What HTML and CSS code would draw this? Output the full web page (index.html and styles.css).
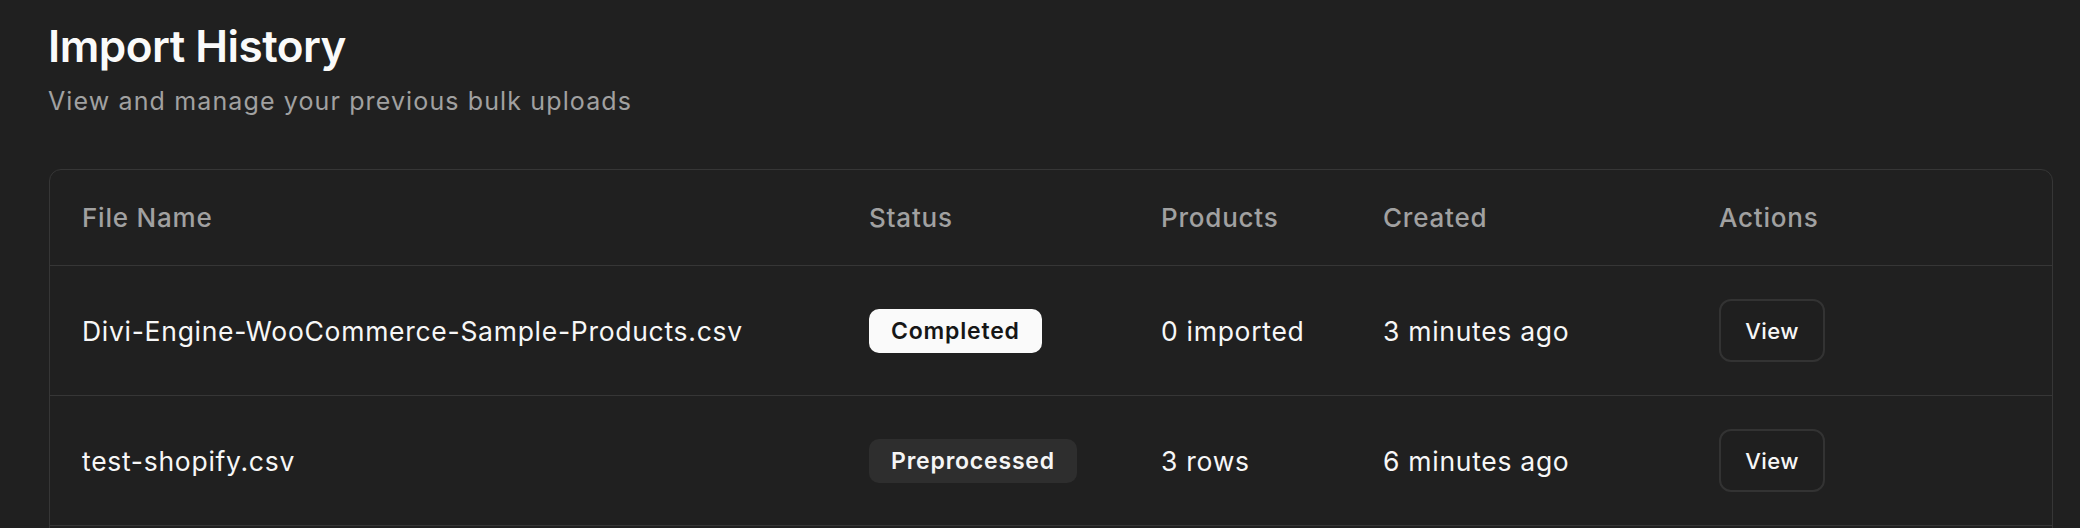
FILE: index.html
```html
<!DOCTYPE html>
<html lang="en">
<head>
<meta charset="utf-8">
<title>Import History</title>
<link rel="stylesheet" href="styles.css">
</head>
<body>
<main class="page">
  <header class="page-head">
    <h1 class="title">Import History</h1>
    <p class="subtitle">View and manage your previous bulk uploads</p>
  </header>
  <section class="card">
    <table class="table">
      <colgroup>
        <col class="c-file">
        <col class="c-status">
        <col class="c-products">
        <col class="c-created">
        <col class="c-actions">
      </colgroup>
      <thead>
        <tr>
          <th>File Name</th>
          <th>Status</th>
          <th>Products</th>
          <th>Created</th>
          <th>Actions</th>
        </tr>
      </thead>
      <tbody>
        <tr>
          <td>Divi-Engine-WooCommerce-Sample-Products.csv</td>
          <td><span class="badge badge-light">Completed</span></td>
          <td>0 imported</td>
          <td>3 minutes ago</td>
          <td><button class="btn" type="button">View</button></td>
        </tr>
        <tr>
          <td>test-shopify.csv</td>
          <td><span class="badge badge-dark">Preprocessed</span></td>
          <td>3 rows</td>
          <td>6 minutes ago</td>
          <td><button class="btn" type="button">View</button></td>
        </tr>
      </tbody>
    </table>
  </section>
</main>
</body>
</html>
```

FILE: styles.css
```css
html, body {
  margin: 0;
  padding: 0;
  background: #202020;
  height: 100%;
  overflow: hidden;
}

body {
  font-family: Inter, "Noto Sans", "Liberation Sans", sans-serif;
  color: #f5f5f5;
}

.page {
  padding: 21px 27px 0 49px;
}

.page-head {
  display: flex;
  flex-direction: column;
  gap: 14px;
}

.title {
  margin: 0 0 0 -1px;
  font-size: 44px;
  line-height: 50px;
  font-weight: 600;
  letter-spacing: -0.012em;
  color: #fafafa;
}

.subtitle {
  margin: 0 0 0 -1px;
  font-size: 25px;
  line-height: 32px;
  color: #a1a1a1;
  font-weight: 400;
  letter-spacing: 0.045em;
}

.card {
  margin-top: 52px;
  border: 1px solid #363636;
  border-radius: 12px;
  padding-bottom: 40px;
  overflow: hidden;
}

.table {
  width: 100%;
  border-collapse: collapse;
  table-layout: fixed;
}

.c-file { width: 787px; }
.c-status { width: 292px; }
.c-products { width: 222px; }
.c-created { width: 336px; }
.c-actions { width: auto; }

.table th {
  height: 95px;
  padding: 0 0 0 32px;
  text-align: left;
  vertical-align: middle;
  font-size: 26px;
  font-weight: 500;
  color: #a1a1a1;
  letter-spacing: 0.03em;
  border-bottom: 1px solid #363636;
}

.table td {
  height: 129px;
  padding: 0 0 0 32px;
  vertical-align: middle;
  font-size: 26.5px;
  font-weight: 400;
  color: #f7f7f7;
  letter-spacing: 0.027em;
  border-bottom: 1px solid #363636;
  white-space: nowrap;
}

.badge {
  display: inline-block;
  height: 44px;
  line-height: 44px;
  padding: 0 22px;
  border-radius: 10px;
  font-size: 23px;
  font-weight: 600;
  letter-spacing: 0.035em;
}

.badge-light {
  background: #fafafa;
  color: #161616;
}

.badge-dark {
  background: #2e2e2e;
  color: #f5f5f5;
}

.btn {
  display: inline-flex;
  align-items: center;
  justify-content: center;
  height: 63px;
  width: 106px;
  padding: 0;
  background: #1f1f1f;
  border: 2px solid #333333;
  border-radius: 12px;
  color: #f7f7f7;
  font-family: inherit;
  font-size: 22px;
  font-weight: 500;
  letter-spacing: 0.02em;
  cursor: pointer;
}
```
